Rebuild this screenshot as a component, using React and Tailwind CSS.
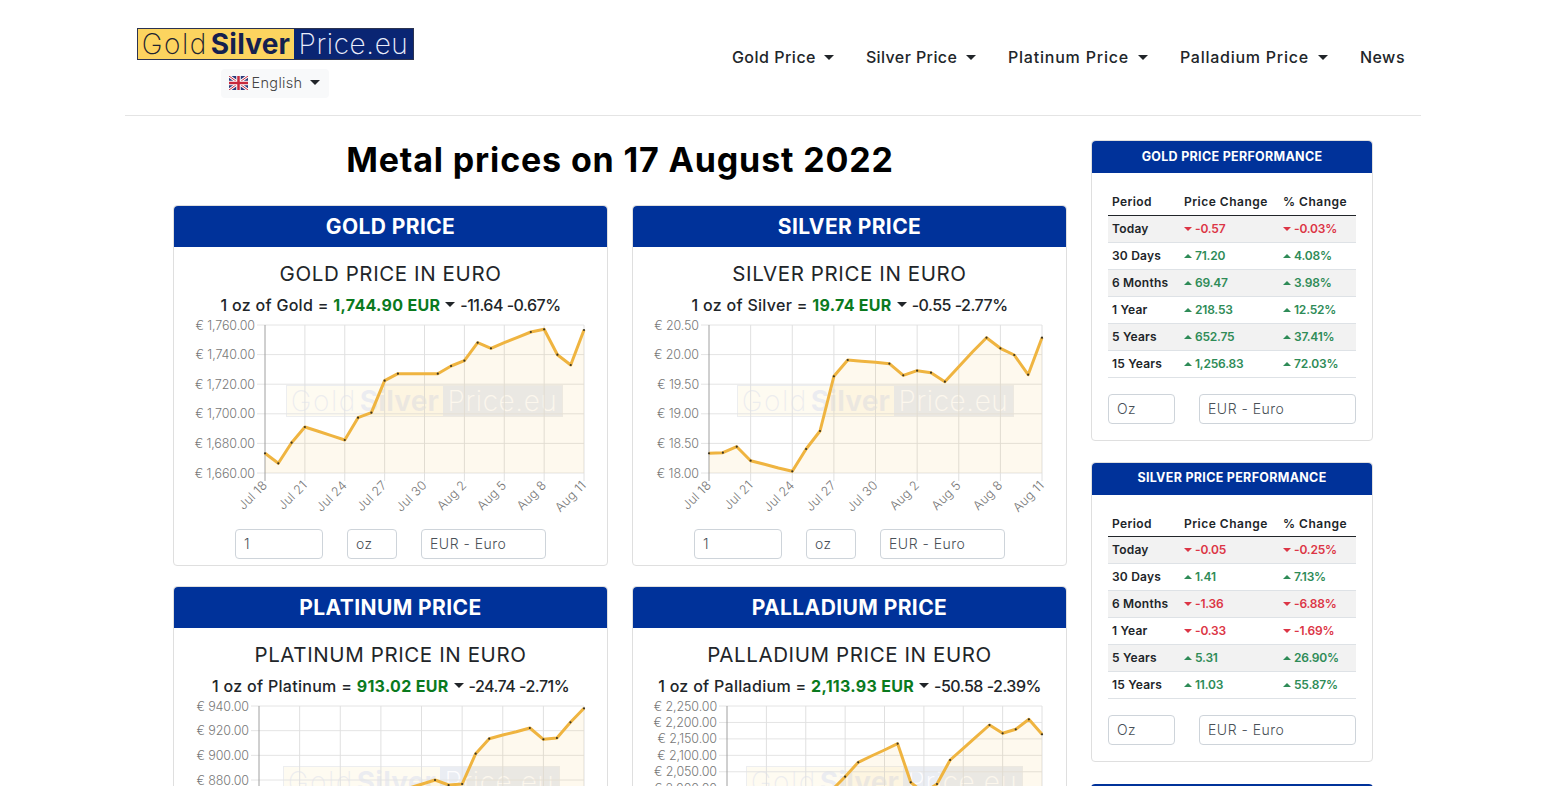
const font = { fontFamily: 'Inter, "Noto Sans", sans-serif' };

const nav = [
  { label: 'Gold Price', box: 'w-[83px] tracking-[0.5px]' },
  { label: 'Silver Price', box: 'w-[91px] tracking-[0.4px]' },
  { label: 'Platinum Price', box: 'w-[121px] tracking-[0.8px]' },
  { label: 'Palladium Price', box: 'w-[129px] tracking-[0.75px]' },
];

const charts = [
  {
    metal: 'Gold',
    price: '1,744.90',
    change: '-11.64 -0.67%',
    x0: 91,
    x1: 410,
    ticks: ['1,760.00', '1,740.00', '1,720.00', '1,700.00', '1,680.00', '1,660.00'],
    ys: [135.3, 145.3, 124.7, 109, 113.3, 117.7, 122, 99.7, 94.7, 62.7, 55.7, 55.7, 55.7, 55.7, 48, 42.7, 24.7, 30.3, 24.7, 19.3, 14, 11.3, 36.7, 47, 12],
  },
  {
    metal: 'Silver',
    price: '19.74',
    change: '-0.55 -2.77%',
    x0: 76,
    x1: 409,
    ticks: ['20.50', '20.00', '19.50', '19.00', '18.50', '18.00'],
    ys: [135.3, 134.7, 128.7, 142.7, 146.3, 150, 153.3, 131, 113, 58.3, 42, 43.3, 44.3, 45.7, 57.3, 52.7, 54.7, 63.7, 48.7, 33.7, 19.7, 30.3, 37, 56.7, 19.7],
  },
  {
    metal: 'Platinum',
    price: '913.02',
    change: '-24.74 -2.71%',
    x0: 85,
    x1: 410,
    ticks: ['940.00', '920.00', '900.00', '880.00', '860.00', '840.00', '820.00'],
    ys: [125, 130, 120, 125, 130, 140, 135, 125, 115, 105, 100, 89.3, 85.3, 81, 86, 85, 54.7, 39.7, 36, 32.7, 29, 40.3, 39, 23.3, 9.3],
  },
  {
    metal: 'Palladium',
    price: '2,113.93',
    change: '-50.58 -2.39%',
    x0: 94,
    x1: 409,
    ticks: ['2,250.00', '2,200.00', '2,150.00', '2,100.00', '2,050.00', '2,000.00', '1,950.00', '1,900.00', '1,850.00', '1,800.00'],
    ys: [130, 135, 128, 125, 122, 118, 110, 105, 91, 77.7, 63.3, 57, 51, 44.7, 83.3, 94, 85, 61, 49.3, 37.7, 26, 34.3, 30.3, 20.3, 35.3],
  },
];

const xLabels = ['Jul 18', 'Jul 21', 'Jul 24', 'Jul 27', 'Jul 30', 'Aug 2', 'Aug 5', 'Aug 8', 'Aug 11'];
const noDot = [4, 5, 11, 12, 18, 19];

const performance = [
  {
    title: 'GOLD PRICE PERFORMANCE',
    rows: [
      ['Today', '-0.57', '-0.03%'],
      ['30 Days', '71.20', '4.08%'],
      ['6 Months', '69.47', '3.98%'],
      ['1 Year', '218.53', '12.52%'],
      ['5 Years', '652.75', '37.41%'],
      ['15 Years', '1,256.83', '72.03%'],
    ],
  },
  {
    title: 'SILVER PRICE PERFORMANCE',
    rows: [
      ['Today', '-0.05', '-0.25%'],
      ['30 Days', '1.41', '7.13%'],
      ['6 Months', '-1.36', '-6.88%'],
      ['1 Year', '-0.33', '-1.69%'],
      ['5 Years', '5.31', '26.90%'],
      ['15 Years', '11.03', '55.87%'],
    ],
  },
];

function Caret({ className = '' }) {
  return <span className={`inline-block h-0 w-0 border-x-[5px] border-t-[5px] border-x-transparent border-t-[#212529] ${className}`} />;
}

function Logo() {
  return (
    <div className="flex h-[32px] w-[277px] border border-[#2b3350] text-[28px] leading-[30px] tracking-[0.2px]">
      <div className="flex w-[156px] justify-center bg-[#fcd45f] font-extralight text-[#1e2430]">
        <span className="tracking-[1.5px]">Gold</span>
        <span className="ml-[3px] font-bold text-[#14204f]">Silver</span>
      </div>
      <div className="flex flex-1 justify-center bg-[#0a2573] font-extralight tracking-[0.6px] text-[#e9edfb]">Price.eu</div>
    </div>
  );
}

function Flag() {
  return (
    <svg width="19" height="14" viewBox="0 0 19 14">
      <rect width="19" height="14" fill="#2b3a7a" />
      <path d="M0 0L19 14M19 0L0 14" stroke="#fff" strokeWidth="3" />
      <path d="M0 0L19 14M19 0L0 14" stroke="#c8283c" strokeWidth="1" />
      <path d="M9.5 0V14M0 7H19" stroke="#fff" strokeWidth="4.5" />
      <path d="M9.5 0V14M0 7H19" stroke="#c8283c" strokeWidth="2.5" />
    </svg>
  );
}

function Chart({ x0, x1, ticks, ys }) {
  const top = 7;
  const bottom = 155;
  const step = (x1 - x0) / 24;
  const pts = ys.map((y, i) => [x0 + i * step, y]);
  const line = pts.map((p) => p.join(',')).join(' ');
  const area = `${x0},${bottom} ${line} ${x1},${bottom}`;
  const rowH = (bottom - top) / (ticks.length - 1);
  const mid = (x0 + x1) / 2;

  return (
    <div className="relative h-[202px] w-[433px]">
      <div className="absolute top-[67px] opacity-[0.08]" style={{ left: mid - 138.5 }}>
        <Logo />
      </div>
      <svg className="absolute inset-0" width="433" height="202" viewBox="0 0 433 202">
        {ticks.map((t, i) => (
          <g key={t}>
            <line x1={x0 - 8} x2={x1} y1={top + i * rowH} y2={top + i * rowH} stroke="#e4e4e4" />
            <text x={x0 - 10} y={top + i * rowH + 4.5} textAnchor="end" fontSize="12.5" fontWeight="300" letterSpacing="-0.1" fill="#777">
              € {t}
            </text>
          </g>
        ))}
        {xLabels.map((l, i) => {
          const x = x0 + i * 3 * step;
          return (
            <g key={l}>
              <line x1={x} x2={x} y1={top} y2={bottom + 8} stroke={i === 0 ? '#a0a0a0' : '#e0e0e0'} />
              <text transform={`translate(${x + 3} ${bottom + 13}) rotate(-45)`} textAnchor="end" fontSize="12.5" fontWeight="300" letterSpacing="0.2" fill="#777">
                {l}
              </text>
            </g>
          );
        })}
        <polygon points={area} fill="#f0c040" fillOpacity="0.09" />
        <polyline points={line} fill="none" stroke="#efb440" strokeWidth="3" strokeLinejoin="round" />
        {pts.map((p, i) =>
          noDot.includes(i) ? null : <circle key={i} cx={p[0]} cy={p[1]} r="1.1" fill="#3a3320" />
        )}
      </svg>
    </div>
  );
}

function Field({ className = '', children }) {
  return (
    <div className={`flex h-[30px] items-center rounded border border-[#ced4da] bg-white px-2 text-sm font-light tracking-[0.5px] text-[#495057] ${className}`}>
      {children}
    </div>
  );
}

function PriceCard({ metal, price, change, ...chart }) {
  const name = metal.toUpperCase();
  return (
    <div className="h-[361px] rounded border border-[#dfdfdf] bg-white">
      <div className="flex h-[41px] items-center justify-center rounded-t bg-[#00329a] text-[21px] font-bold tracking-[0.4px] text-white">
        {name} PRICE
      </div>
      <h2 className="mt-[14px] text-center text-[20.5px] leading-[26px] tracking-[0.6px] text-[#212529]">{name} PRICE IN EURO</h2>
      <p className="mt-[5px] flex h-[26px] items-center justify-center pb-[1px] text-[16px] font-medium tracking-[0.3px] text-[#212529]">
        1 oz of {metal} =&nbsp;<b className="font-bold text-[#0a7a1e]">{price} EUR</b>
        <Caret className="mx-[5px]" />
        <span className="tracking-[-0.5px]">{change}</span>
      </p>
      <Chart {...chart} />
      <div className="mt-[9px] flex justify-center gap-6">
        <Field className="w-[88px]">1</Field>
        <Field className="w-[50px]">oz</Field>
        <Field className="w-[125px]">EUR - Euro</Field>
      </div>
    </div>
  );
}

function Change({ value }) {
  const down = value.startsWith('-');
  return (
    <span className={`flex items-center gap-[3px] tracking-[-0.2px] ${down ? 'text-[#dc3545]' : 'text-[#2e8b57]'}`}>
      <span className={`inline-block h-0 w-0 border-x-[4px] border-x-transparent ${down ? 'border-t-[4px] border-t-[#dc3545]' : 'border-b-[4px] border-b-[#2e8b57]'}`} />
      {value}
    </span>
  );
}

function PerformanceCard({ title, rows }) {
  return (
    <div className="h-[300.6px] rounded border border-[#dfdfdf] bg-white">
      <div className="flex h-[32px] items-center justify-center rounded-t bg-[#00329a] text-[12.5px] font-bold tracking-[0.3px] text-white">
        {title}
      </div>
      <div className="px-4 pt-[15px]">
        <table className="w-[248px] table-fixed border-collapse text-[12px] font-semibold tracking-[0.2px] text-[#212529]">
          <thead>
            <tr className="h-[27px] border-b border-[#212529]">
              <th className="w-[76px] pl-1 pt-[1.5px] text-left font-semibold tracking-[0.4px]">Period</th>
              <th className="w-[99px] pt-[1.5px] text-left font-semibold tracking-[0.5px]">Price Change</th>
              <th className="pt-[1.5px] text-left font-semibold tracking-[0.5px]">% Change</th>
            </tr>
          </thead>
          <tbody>
            {rows.map((r, i) => (
              <tr key={r[0]} className={`h-[27px] border-b border-[#dee2e6] ${i % 2 === 0 ? 'bg-[#f2f2f2]' : ''}`}>
                <td className="pl-1">{r[0]}</td>
                <td><Change value={r[1]} /></td>
                <td><Change value={r[2]} /></td>
              </tr>
            ))}
          </tbody>
        </table>
        <div className="mt-[16px] flex gap-6">
          <Field className="w-[67px]">Oz</Field>
          <Field className="w-[157px]">EUR - Euro</Field>
        </div>
      </div>
    </div>
  );
}

export default function App() {
  return (
    <div className="h-[786px] overflow-hidden bg-white text-[#212529]" style={font}>
      <div className="mx-auto w-[1296px]">
        <header className="flex h-[116px] items-start border-b border-[#e4e4e4] pl-3 pr-4">
          <div className="flex w-[277px] flex-col items-center pt-[28px]">
            <Logo />
            <button className="mr-[2px] mt-[9px] flex h-[29px] w-[108px] items-center justify-center gap-1 rounded bg-[#f8f9fa] pb-[2px] text-[14.5px] font-light tracking-[0.3px] text-[#444]">
              <Flag />
              English
              <Caret className="ml-1" />
            </button>
          </div>
          <nav className="ml-auto flex h-[114px] items-center gap-8 text-[16px] font-medium tracking-[0.5px]">
            {nav.map((n) => (
              <a key={n.label} className="flex items-center gap-[9px]">
                <span className={`whitespace-nowrap ${n.box}`}>{n.label}</span>
                <Caret />
              </a>
            ))}
            <a>News</a>
          </nav>
        </header>
        <div className="flex pl-[48px]">
          <main className="w-[894px]">
            <h1 className="mt-[24px] text-center text-[34px] font-bold leading-[40px] tracking-[0.85px] text-black">Metal prices on 17 August 2022</h1>
            <div className="mt-[25px] grid grid-cols-[435px_435px] gap-x-[24px] gap-y-[20px]">
              {charts.map((c) => (
                <PriceCard key={c.metal} {...c} />
              ))}
            </div>
          </main>
          <aside className="ml-[24px] flex w-[282px] flex-col gap-[21px] pt-[24px]">
            {performance.map((p) => (
              <PerformanceCard key={p.title} {...p} />
            ))}
            <div className="mt-[1px] h-[40px] rounded-t bg-[#00329a]" />
          </aside>
        </div>
      </div>
    </div>
  );
}
